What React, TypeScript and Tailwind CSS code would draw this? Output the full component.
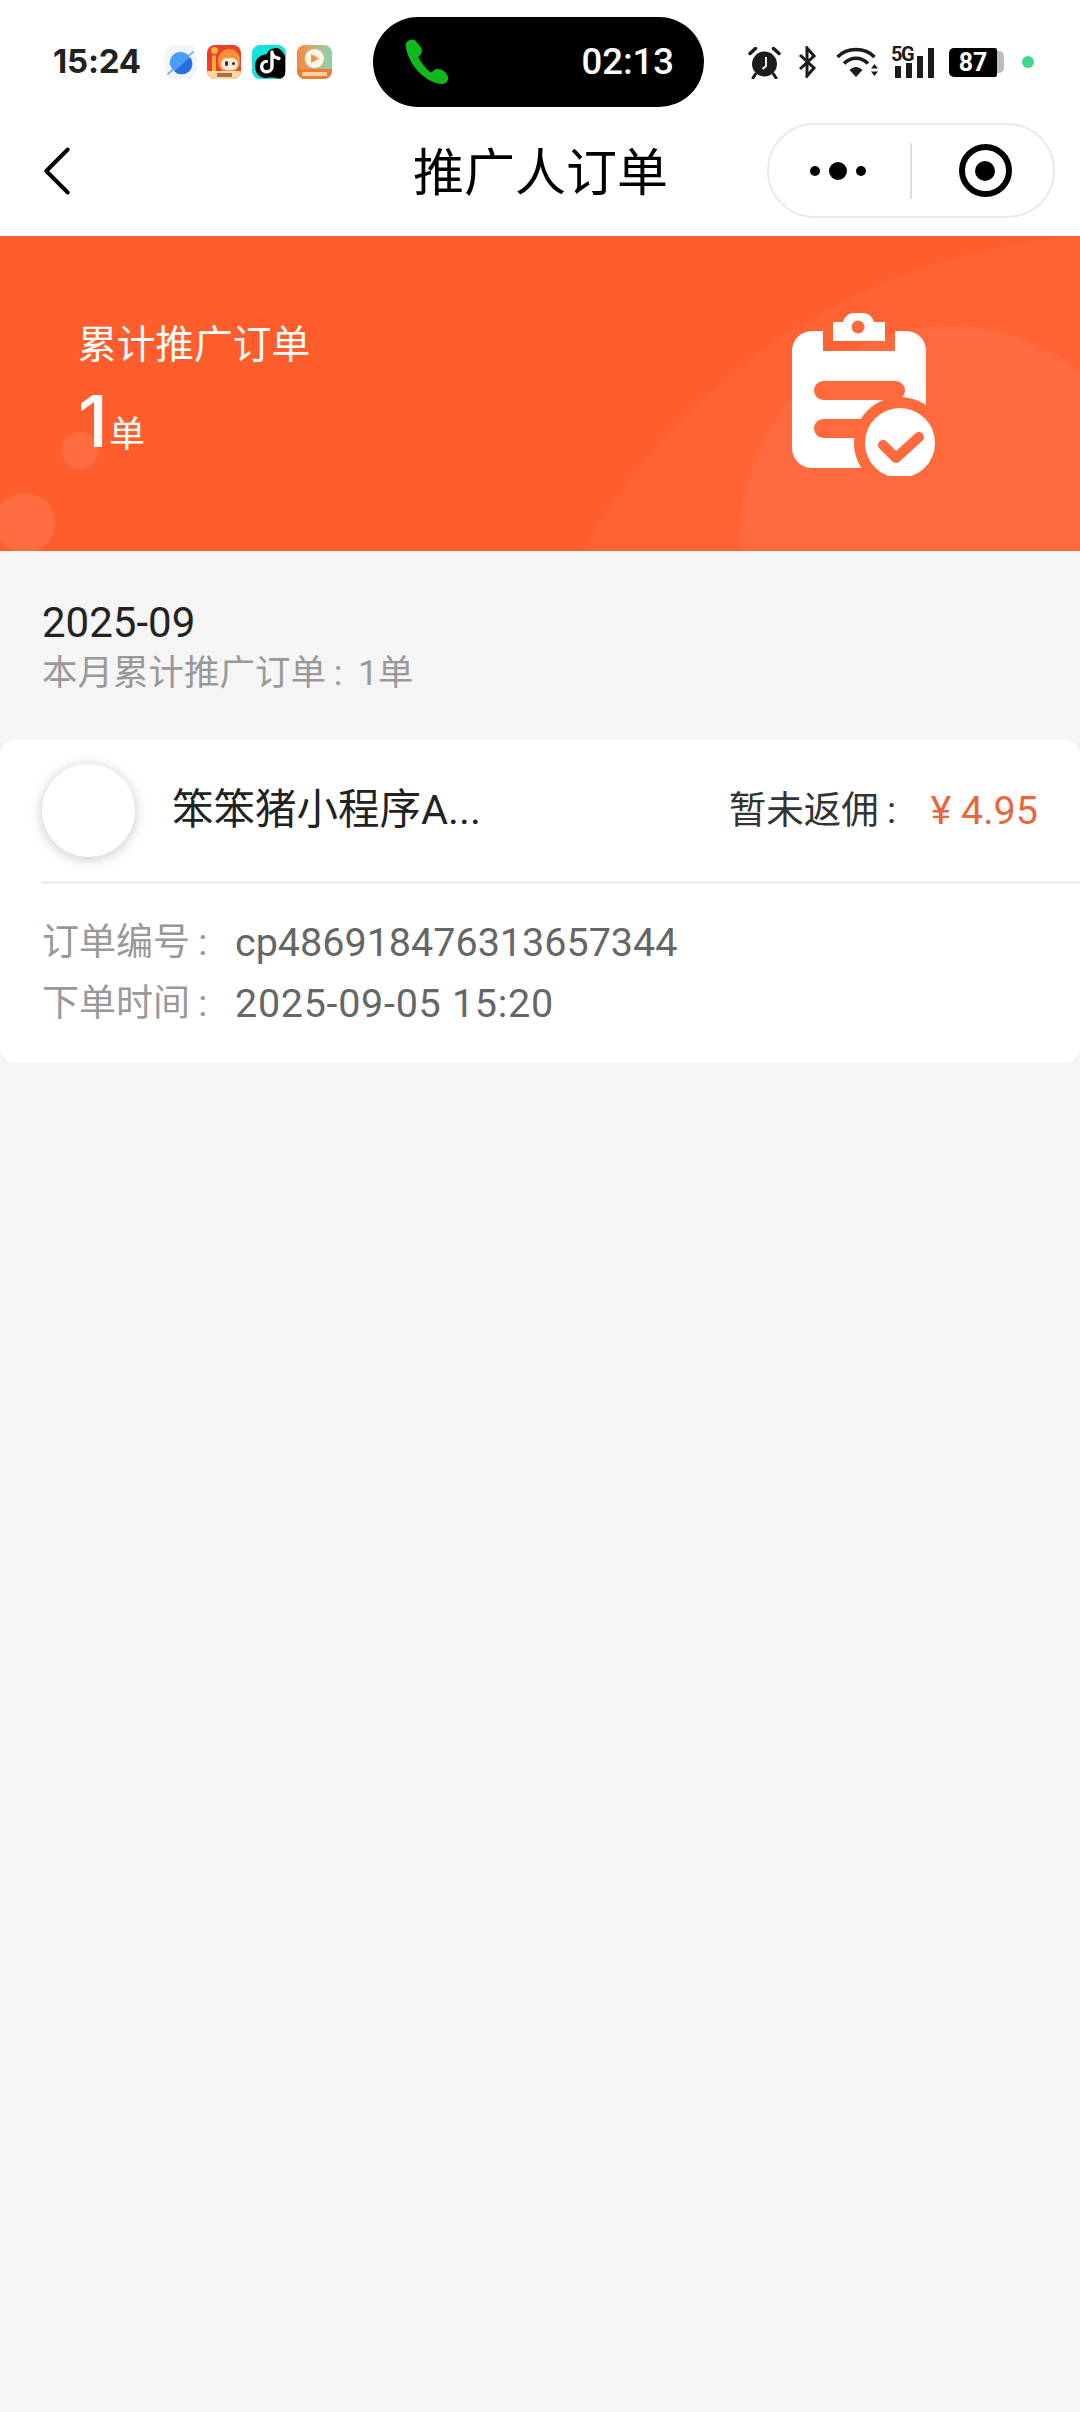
import { ChevronLeft } from "lucide-react";

const BRAND = "#ff5d2c";

function PlanetIcon() {
  return (
    <div className="w-[31px] h-[34px] rounded-[8px] bg-[#f1f4f8] flex items-center justify-center">
      <svg width="27" height="27" viewBox="0 0 28 28">
        <circle cx="14" cy="14" r="11" fill="#4a9df6" />
        <path d="M24 8.5A11 11 0 0 1 7.5 23Z" fill="#2a6be0" />
        <path d="M1 26 27 3" stroke="#4a9df6" strokeWidth="1.4" strokeLinecap="round" />
      </svg>
    </div>
  );
}

function MascotIcon() {
  return (
    <div className="relative w-[34px] h-[34px] rounded-[8px] bg-[#ee3d2c] overflow-hidden">
      <div className="absolute left-[11px] top-[4px] w-[22px] h-[24px] rounded-full bg-[#f9913a]" />
      <div className="absolute left-[4px] top-[2px] w-[7px] h-[7px] rounded-full bg-[#fbb03b]" />
      <div className="absolute left-[5px] top-[10px] w-[4px] h-[18px] rounded-full bg-[#fbb03b]" />
      <div className="absolute left-[14px] top-[13px] w-[17px] h-[12px] rounded-full bg-[#f6ead8]" />
      <div className="absolute left-[18px] top-[16px] w-[3px] h-[5px] rounded-full bg-[#33312e]" />
      <div className="absolute left-[25px] top-[17px] w-[3px] h-[3px] rounded-full bg-[#33312e]" />
      <div className="absolute left-0 right-0 bottom-0 h-[8px] bg-[#fbd9a5]" />
      <div className="absolute left-[10px] right-[9px] bottom-[2px] h-[4px] bg-[#a8704a]" />
    </div>
  );
}

function TiktokIcon() {
  return (
    <div className="relative w-[34px] h-[34px] rounded-[8px] bg-[#12e4dc] overflow-hidden">
      <svg className="absolute inset-0" width="34" height="34" viewBox="0 0 34 34">
        <path d="M3 21C3 12 10 10 15 9 16 5 20 3 25 3 29 4 31 7 33 11V31C33 33 31 34 29 34 24 33 20 32 14 33 7 33 3 28 3 21Z" fill="#000" />
        <path
          d="M20 7V21.5A5.2 5.2 0 1 1 14.5 16.4M20 8C21 11 24 13 27 13.5"
          fill="none"
          stroke="#fff"
          strokeWidth="3.4"
          strokeLinecap="round"
        />
      </svg>
    </div>
  );
}

function PlayIcon() {
  return (
    <div className="relative w-[35px] h-[34px] rounded-[8px] bg-gradient-to-r from-[#f7843a] to-[#7fd3b0] overflow-hidden">
      <div className="absolute left-[8px] top-[4px] w-[19px] h-[19px] rounded-full bg-[#fff5e8] flex items-center justify-center">
        <svg width="11" height="11" viewBox="0 0 11 11">
          <path d="M2 1 10 5.5 2 10Z" fill="#f7923f" />
        </svg>
      </div>
      <div className="absolute left-0 right-0 bottom-0 h-[10px] bg-[#ef7a33]" />
      <div className="absolute left-[5px] right-[5px] bottom-[3px] h-[4px] bg-[#fbd2a8]" />
    </div>
  );
}

function PhoneIcon() {
  return (
    <svg width="46" height="46" viewBox="0 0 46 48">
      <path
        d="M5 1C2 2 0 5 1 9 3 20 10 32 21 40 26 44 33 47 39 47 43 47 45 44 45 41 45 37 42 34 38 32 35 31 32 31 30 33L27 35C22 31 17 25 14 19L17 15C18 13 18 11 17 9L12 3C10 1 8 0 5 1Z"
        fill="#10b81d"
      />
    </svg>
  );
}

function StatusIcons() {
  return (
    <div className="flex items-center ml-[44px]">
      {/* alarm */}
      <svg width="33" height="33" viewBox="0 0 33 33">
        <circle cx="16.5" cy="18" r="12.5" fill="#1c1c1c" />
        <path d="M2 7.5 7.5 2.5 M31 7.5 25.5 2.5" stroke="#1c1c1c" strokeWidth="3.5" strokeLinecap="round" />
        <path d="M7.5 28 5 32M25.5 28 28 32" stroke="#1c1c1c" strokeWidth="3" strokeLinecap="round" />
        <path d="M18 11V20L14.5 23" stroke="#fff" strokeWidth="1.8" fill="none" />
      </svg>
      {/* bluetooth */}
      <svg className="ml-[17px]" width="18" height="32" viewBox="0 0 18 32">
        <path d="M2 9 16 22 9 30V2L16 10 2 23" fill="none" stroke="#1c1c1c" strokeWidth="3" />
      </svg>
      {/* wifi */}
      <svg className="ml-[20px]" width="43" height="32" viewBox="0 0 43 32">
        <path d="M1.500 11C11 1 29 1 38.500 11" fill="none" stroke="#1c1c1c" strokeWidth="3.6" />
        <path d="M8 17.500C15 10.500 25 10.500 32 17.500" fill="none" stroke="#1c1c1c" strokeWidth="3.6" />
        <path d="M13.500 24C18 20 22 20 26.500 24L20 31Z" fill="#1c1c1c" />
        <path d="M35 22.500 38.500 18 42 22.500ZM35 25.500 38.500 30 42 25.500Z" fill="#1c1c1c" />
      </svg>
      {/* signal */}
      <div className="relative w-[43px] h-[32px] ml-[12px]">
        <span className="absolute left-0 -top-[2px] text-[20px] leading-[20px] font-bold text-[#1c1c1c] font-['Roboto',sans-serif] tracking-[-1.5px]">
          5G
        </span>
        <div className="absolute right-0 bottom-0 flex items-end gap-[5px]">
          <div className="w-[6px] h-[12px] bg-[#1c1c1c]" />
          <div className="w-[6px] h-[15px] bg-[#1c1c1c]" />
          <div className="w-[6px] h-[22px] bg-[#1c1c1c]" />
          <div className="w-[6px] h-[30px] bg-[#1c1c1c]" />
        </div>
      </div>
      {/* battery */}
      <div className="flex items-center ml-[15px]">
        <div className="w-[48px] h-[29px] rounded-l-[5px] rounded-r-[2px] bg-black text-white text-[25px] leading-[29px] font-bold text-center font-['Roboto',sans-serif]">
          87
        </div>
        <div className="w-[7px] h-[22px] rounded-r-[5px] bg-[#bdbdbd]" />
      </div>
      <div className="w-[12px] h-[12px] rounded-full bg-[#3ed98a] ml-[18px]" />
    </div>
  );
}

function StatusBar() {
  return (
    <div className="flex items-center h-[124px] pl-[53px] bg-white">
      <span className="w-[86px] text-[33px] font-bold text-[#222] tracking-[-0.2px] font-['Inter',sans-serif]">15:24</span>
      <div className="flex items-center gap-[11px] ml-[26px]">
        <PlanetIcon />
        <MascotIcon />
        <TiktokIcon />
        <PlayIcon />
      </div>
      <div className="flex items-center justify-between w-[331px] h-[90px] ml-[41px] pl-[31px] pr-[30px] rounded-full bg-black">
        <PhoneIcon />
        <span className="text-[36.500px] font-medium text-white">02:13</span>
      </div>
      <StatusIcons />
    </div>
  );
}

function NavBar() {
  return (
    <div className="flex items-center h-[112px] pb-[20px] bg-white">
      <ChevronLeft className="ml-[14px] mt-[2px] w-[86px] h-[86px] text-black" strokeWidth={1.1} />
      <h1 className="ml-[313px] mt-[6px] text-[51px] font-normal text-black leading-none whitespace-nowrap">推广人订单</h1>
      <div className="flex items-center w-[288px] h-[95px] mt-[1px] ml-auto mr-[25px] rounded-full border-2 border-[#e9e9e9] bg-white">
        <div className="flex items-center justify-center gap-[9px] w-[138px]">
          <div className="w-[10px] h-[10px] rounded-full bg-black" />
          <div className="w-[18px] h-[18px] rounded-full bg-black" />
          <div className="w-[10px] h-[10px] rounded-full bg-black" />
        </div>
        <div className="ml-[3px] w-[2px] h-[56px] bg-[#dedede]" />
        <div className="flex flex-1 items-center justify-center pl-[5px]">
          <div className="flex items-center justify-center w-[53px] h-[53px] rounded-full border-[6px] border-black">
            <div className="w-[20px] h-[20px] rounded-full bg-black" />
          </div>
        </div>
      </div>
    </div>
  );
}

function ClipboardCheck() {
  const ink = "#ff693b";
  return (
    <svg width="160" height="165" viewBox="0 0 160 165">
      <path
        d="M4 40A20 20 0 0 1 24 20H35V40H107V20H118A20 20 0 0 1 138 40V137A20 20 0 0 1 118 157H24A20 20 0 0 1 4 137Z"
        fill="#fff"
      />
      <path d="M45 30V11H55C57 5 61 2 66 2H75C80 2 84 5 86 11H97V30Z" fill="#fff" />
      <circle cx="70" cy="16" r="6.5" fill={ink} />
      <rect x="26" y="70" width="91" height="19" rx="9.5" fill={ink} />
      <rect x="26" y="108" width="70" height="19" rx="9.5" fill={ink} />
      <circle cx="112" cy="132" r="46" fill={ink} />
      <circle cx="112" cy="132" r="35" fill="#fff" />
      <path d="M95 134 108 147 131 126" fill="none" stroke={ink} strokeWidth="10" strokeLinejoin="round" strokeLinecap="round" />
    </svg>
  );
}

function Banner() {
  return (
    <section className="relative h-[315px] overflow-hidden" style={{ backgroundColor: BRAND }}>
      {/* decorative circles */}
      <div className="absolute left-[502px] -top-[1px] w-[1240px] h-[1240px] rounded-full bg-white/[0.04]" />
      <div className="absolute left-[740px] top-[90px] w-[420px] h-[420px] rounded-full bg-white/[0.05]" />
      <div className="absolute left-[62px] top-[196px] w-[36px] h-[37px] rounded-full bg-white/10" />
      <div className="absolute -left-[5px] top-[257px] w-[60px] h-[60px] rounded-full bg-white/10" />

      <div className="relative flex items-start justify-between h-full pl-[78px] pr-[132px]">
        <div className="pt-[86px] text-white">
          <p className="text-[38.700px] leading-[46px]">累计推广订单</p>
          <p className="flex items-baseline mt-[15px] leading-[76px]">
            <span className="text-[72px] font-medium font-['Inter',sans-serif]">1</span>
            <span className="ml-[1px] text-[36px] font-['Noto_Sans_CJK_SC',sans-serif]">单</span>
          </p>
        </div>
        <div className="pt-[75px]">
          <ClipboardCheck />
        </div>
      </div>
    </section>
  );
}

// the reference's colon sits a little left of the middle of its cell
function Colon() {
  return <span className="inline-block w-[0.9em] pl-[0.22em]">:</span>;
}

function OrderRow({ label, value, wide }: { label: string; value: string; wide?: boolean }) {
  return (
    <div className="flex items-center h-[61px] whitespace-nowrap">
      <span className="w-[193px] text-[37px] text-[#999]">
        {label}
        <Colon />
      </span>
      <span className={wide ? "text-[39.500px] text-[#666] tracking-[0.7px]" : "text-[39.500px] text-[#666]"}>{value}</span>
    </div>
  );
}

function OrderCard() {
  return (
    <div className="h-[323px] rounded-[16px] bg-white">
      <div className="flex items-center h-[141px] pl-[42px] pr-[42px]">
        <div className="w-[93px] h-[93px] rounded-full bg-white shadow-[0_2px_14px_rgba(0,0,0,0.22)]" />
        <span className="ml-[37px] text-[41.500px] text-[#222] whitespace-nowrap">笨笨猪小程序A...</span>
        <span className="ml-auto text-[37.500px] text-[#333] whitespace-nowrap">
          暂未返佣
          <Colon />
        </span>
        <span className="ml-[18px] text-[39.500px] text-[#e9663f] whitespace-nowrap">¥ 4.95</span>
      </div>
      <div className="h-[3px] ml-[42px] bg-[#efefef]" />
      <div className="pl-[42px] pt-[28px]">
        <OrderRow label="订单编号" value="cp486918476313657344" />
        <OrderRow label="下单时间" value="2025-09-05 15:20" wide />
      </div>
    </div>
  );
}

export default function App() {
  return (
    <div className="w-[1080px] h-[2412px] overflow-hidden bg-[#f5f5f5] font-['Roboto','Noto_Sans_CJK_SC',sans-serif]">
      <StatusBar />
      <NavBar />
      <Banner />
      <div className="pl-[42px] pt-[47px] h-[189px]">
        <p className="text-[42px] leading-[50px] text-[#222]">2025-09</p>
        <p className="mt-[3px] text-[35.500px] leading-[44px] text-[#999]">
          本月累计推广订单
          <Colon />
          1单
        </p>
      </div>
      <OrderCard />
    </div>
  );
}
